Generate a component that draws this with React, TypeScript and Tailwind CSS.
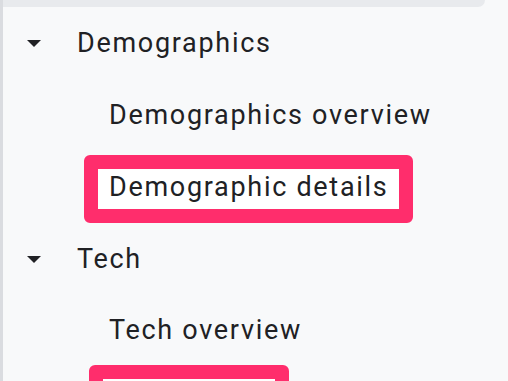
import React from "react";

const Tri = () => (
  <svg width="14" height="7" viewBox="0 0 14 7" className="shrink-0">
    <path d="M0 0 L14 0 L7 7 Z" fill="#202124" />
  </svg>
);

export default function App() {
  return (
    <div
      className="w-[508px] h-[381px] overflow-hidden bg-[#f8f9fa] border-l-[3px] border-[#dadce0] text-[#202124] text-[27px] leading-none tracking-[1.7px]"
      style={{ fontFamily: "Roboto, 'Noto Sans', sans-serif" }}
    >
      <div className="h-[7px] w-[482px] bg-[#e8eaed] rounded-br-[24px]" />
      <div className="h-[72px] flex items-center pl-[24px] gap-[36px]">
        <Tri />
        <span>Demographics</span>
      </div>
      <div className="h-[72px] flex items-center pl-[106px]">
        <span>Demographics overview</span>
      </div>
      <div className="h-[72px] flex items-end pl-[81px]">
        <div className="w-[329px] h-[68px] border-[14px] border-[#ff2d6c] rounded-[6px] bg-white flex items-center pl-[11px] pb-[4px]">
          <span>Demographic details</span>
        </div>
      </div>
      <div className="h-[72px] flex items-center pl-[24px] gap-[36px]">
        <Tri />
        <span>Tech</span>
      </div>
      <div className="h-[70px] flex items-center pl-[106px]">
        <span>Tech overview</span>
      </div>
      <div className="pl-[86px]">
        <div className="w-[200px] h-[68px] border-[14px] border-[#ff2d6c] rounded-[6px] bg-white" />
      </div>
    </div>
  );
}
